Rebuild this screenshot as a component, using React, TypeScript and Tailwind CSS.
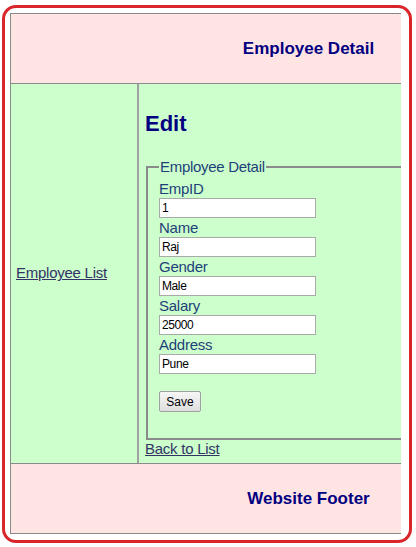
import React from "react";

const fields = [
  { label: "EmpID", value: "1" },
  { label: "Name", value: "Raj" },
  { label: "Gender", value: "Male" },
  { label: "Salary", value: "25000" },
  { label: "Address", value: "Pune" },
];

export default function App(): React.ReactElement {
  return (
    <div className="w-[416px] h-[547px] bg-white font-['Liberation_Sans',Arial,sans-serif]">
      <div className="ml-[2px] mt-[5px] w-[410px] h-[538px] rounded-[14px] border-[3px] border-[#d9262b] pl-[5px] pt-[5px] pr-[8px]">
        <div className="h-[521px] overflow-hidden">
          <div className="w-[596px] border-l border-t border-b border-[#8a8a8a]">
            {/* Header */}
            <div className="h-[70px] bg-[#ffe4e4] flex items-center justify-center border-b border-[#8a8a8a]">
              <h1 className="text-[17px] font-bold text-[#000080]">Employee Detail</h1>
            </div>

            {/* Body */}
            <div className="flex h-[379px] bg-[#ccffcc]">
              <div className="w-[128px] flex items-center pl-[5px] border-r-2 border-[#a0a0a0]">
                <a href="#" className="text-[15px] tracking-[-0.25px] text-[#333366] underline">
                  Employee List
                </a>
              </div>
              <div className="flex-1 pl-[6px] pt-[26px]">
                <h2 className="text-[22px] leading-[28px] font-bold text-[#000080]">Edit</h2>
                <fieldset className="mt-[20px] ml-px border-2 border-[#8a8a8a] pl-[11px] pt-[3px] h-[282px]">
                  <legend className="px-[1px] text-[15px] tracking-[-0.3px] text-[#1f3f7a] leading-[18px]">
                    Employee Detail
                  </legend>
                  {fields.map((f) => (
                    <div key={f.label}>
                      <div className="text-[15px] tracking-[-0.25px] leading-[19px] text-[#1f3f7a]">{f.label}</div>
                      <input
                        readOnly
                        value={f.value}
                        className="block w-[157px] h-[20px] border border-[#a9a9a9] bg-white px-[2px] text-[12px] tracking-[-0.4px] text-black"
                      />
                    </div>
                  ))}
                  <button
                    type="button"
                    className="mt-[17px] w-[42px] h-[21px] border border-[#a0a0a0] rounded-[2px] bg-gradient-to-b from-[#f6f6f6] to-[#dedede] text-[12px] text-black"
                  >
                    Save
                  </button>
                </fieldset>
                <a href="#" className="block text-[15px] tracking-[-0.25px] leading-[18px] text-[#333366] underline">
                  Back to List
                </a>
              </div>
            </div>

            {/* Footer */}
            <div className="h-[70px] bg-[#ffe4e4] flex items-center justify-center border-t border-[#8a8a8a]">
              <p className="text-[17px] font-bold text-[#000080]">Website Footer</p>
            </div>
          </div>
        </div>
      </div>
    </div>
  );
}
